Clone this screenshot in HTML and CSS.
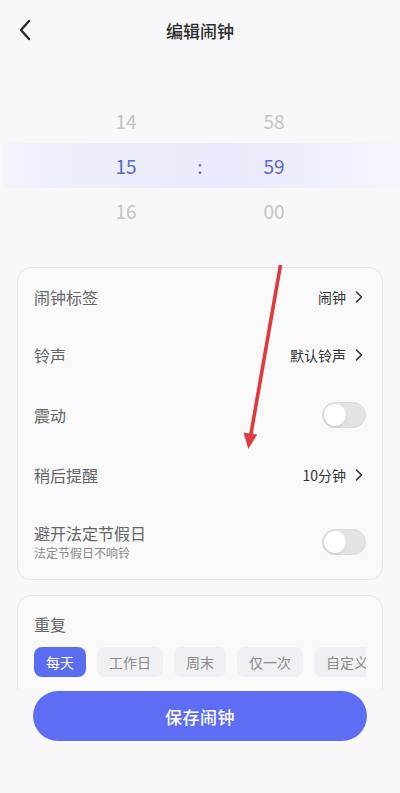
FILE: index.html
```html
<!DOCTYPE html>
<html lang="zh-CN">

<head>
    <meta charset="utf-8">
    <title>编辑闹钟</title>
    <link rel="stylesheet" href="styles.css">
</head>

<body>
    <div class="page">
        <header class="header">
            <button class="back-btn" type="button" aria-label="返回">
                <svg width="14" height="22" viewBox="0 0 14 22">
                    <path d="M11 2 L3 11 L11 20" fill="none" stroke="#2b2b2b" stroke-width="2.4"
                        stroke-linecap="round" stroke-linejoin="round" />
                </svg>
            </button>
            <h1 class="title">编辑闹钟</h1>
        </header>

        <div class="picker">
            <div class="picker-row">
                <span class="cell">14</span>
                <span class="sep"></span>
                <span class="cell">58</span>
            </div>
            <div class="picker-row selected">
                <span class="cell">15</span>
                <span class="sep">:</span>
                <span class="cell">59</span>
            </div>
            <div class="picker-row">
                <span class="cell">16</span>
                <span class="sep"></span>
                <span class="cell">00</span>
            </div>
        </div>

        <div class="card">
            <div class="row">
                <span class="label">闹钟标签</span>
                <span class="value">闹钟
                    <svg class="chev" width="8" height="12" viewBox="0 0 8 12">
                        <path d="M1.5 1 L6.5 6 L1.5 11" fill="none" stroke="#333" stroke-width="1.6"
                            stroke-linecap="round" stroke-linejoin="round" />
                    </svg>
                </span>
            </div>
            <div class="row">
                <span class="label">铃声</span>
                <span class="value">默认铃声
                    <svg class="chev" width="8" height="12" viewBox="0 0 8 12">
                        <path d="M1.5 1 L6.5 6 L1.5 11" fill="none" stroke="#333" stroke-width="1.6"
                            stroke-linecap="round" stroke-linejoin="round" />
                    </svg>
                </span>
            </div>
            <div class="row">
                <span class="label">震动</span>
                <span class="switch"><span class="knob"></span></span>
            </div>
            <div class="row">
                <span class="label">稍后提醒</span>
                <span class="value">10分钟
                    <svg class="chev" width="8" height="12" viewBox="0 0 8 12">
                        <path d="M1.5 1 L6.5 6 L1.5 11" fill="none" stroke="#333" stroke-width="1.6"
                            stroke-linecap="round" stroke-linejoin="round" />
                    </svg>
                </span>
            </div>
            <div class="row">
                <div class="label-group">
                    <span class="label">避开法定节假日</span>
                    <span class="sub">法定节假日不响铃</span>
                </div>
                <span class="switch"><span class="knob"></span></span>
            </div>
        </div>

        <div class="card repeat-card">
            <div class="label">重复</div>
            <div class="chips">
                <span class="chip active">每天</span>
                <span class="chip">工作日</span>
                <span class="chip">周末</span>
                <span class="chip">仅一次</span>
                <span class="chip">自定义</span>
            </div>
        </div>
    </div>

    <footer class="footer">
        <button class="save-btn" type="button">保存闹钟</button>
    </footer>

    <!-- red pointer drawn over the settings -->
    <svg class="pointer" width="400" height="793" viewBox="0 0 400 793" aria-hidden="true">
        <line x1="280.5" y1="265" x2="250.6" y2="436" stroke="#e0393c" stroke-width="3.6" />
        <polygon points="248.3,449 257.2,434.6 243.6,432.4" fill="#e0393c" />
    </svg>
</body>

</html>
```

FILE: styles.css
```css
* {
    box-sizing: border-box;
}

body {
    margin: 0;
    background-color: #f8f8fa;
    font-family: "Noto Sans CJK SC", "Noto Sans", sans-serif;
    color: #333;
    height: 793px;
    overflow: hidden;
}

.page {
    padding-bottom: 120px;
}

/* header */
.header {
    position: relative;
    height: 62px;
    display: flex;
    align-items: center;
    justify-content: center;
}

.back-btn {
    position: absolute;
    left: 18px;
    top: 19px;
    padding: 0;
    border: none;
    background: none;
    display: flex;
}

.title {
    margin: 0;
    font-size: 17px;
    font-weight: 500;
    color: #2b2b2b;
    line-height: 24px;
}

/* time picker */
.picker {
    margin-top: 36px;
}

.picker-row {
    display: flex;
    justify-content: center;
    align-items: center;
    height: 45px;
    font-size: 19px;
    color: #c4c4c4;
}

.picker-row.selected {
    color: #5b68c6;
    margin-left: 3px;
    background: linear-gradient(90deg, rgba(236, 238, 252, 0.3) 0%, #eef0fc 10%, #eaecfb 42%, #e8eafb 55%, #eef0fc 80%, rgba(244, 245, 253, 0.6) 100%);
}

.cell {
    width: 80px;
    text-align: center;
}

.sep {
    width: 68px;
    text-align: center;
}

.picker-row.selected .cell:first-child {
    margin-left: -3px;
}

/* cards */
.card {
    margin: 34px 17px 0;
    background-color: #f9f9fa;
    border: 1px solid #e6e6e9;
    border-radius: 14px;
    padding: 0 16px;
}

.row {
    display: flex;
    align-items: center;
    justify-content: space-between;
    padding: 18px 0;
}

.label {
    font-size: 16px;
    line-height: 22px;
    color: #666;
}

.label-group {
    display: flex;
    flex-direction: column;
}

.sub {
    font-size: 12px;
    line-height: 17px;
    color: #8a8a8a;
}

.value {
    display: flex;
    align-items: center;
    gap: 9px;
    font-size: 14px;
    line-height: 22px;
    color: #333;
    margin-right: 3px;
}

.switch {
    width: 44px;
    height: 26px;
    border-radius: 13px;
    background-color: #e3e3e5;
    border: 1px solid #dadadc;
    padding: 1px;
    display: flex;
}

.knob {
    width: 22px;
    height: 22px;
    border-radius: 50%;
    background-color: #fff;
    box-shadow: 0 1px 2px rgba(0, 0, 0, 0.12);
}

.repeat-card {
    margin-top: 15px;
    padding-top: 17px;
    padding-bottom: 30px;
}

.chips {
    display: flex;
    gap: 11px;
    margin-top: 12px;
    overflow: hidden;
}

.chip {
    flex: none;
    height: 30px;
    padding: 0 12px;
    border-radius: 8px;
    background-color: #f0f0f4;
    color: #8a8a8a;
    font-size: 14px;
    line-height: 30px;
}

.chip.active {
    background-color: #5a6cf0;
    color: #fff;
}

/* bottom save bar */
.footer {
    position: fixed;
    left: 0;
    right: 0;
    bottom: 0;
    height: 103px;
    padding: 1px 33px 0;
    background-color: #f8f8fa;
}

.save-btn {
    width: 100%;
    height: 50px;
    border: none;
    border-radius: 25px;
    background-color: #5d6ef5;
    color: #fff;
    font-family: inherit;
    font-size: 17px;
    font-weight: 500;
    letter-spacing: 0.5px;
}

.pointer {
    position: absolute;
    left: 0;
    top: 0;
    pointer-events: none;
}
```
